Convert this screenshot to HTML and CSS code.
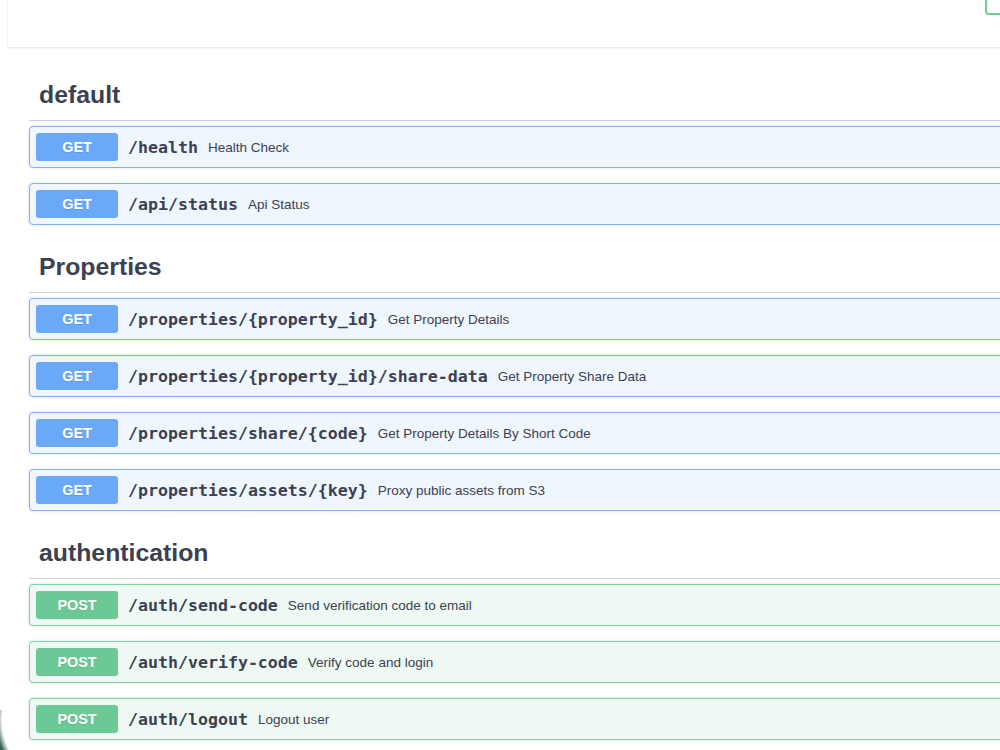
FILE: index.html
```html
<!DOCTYPE html>
<html lang="en">
<head>
    <meta charset="UTF-8">
    <meta name="viewport" content="width=device-width, initial-scale=1.0">
    <title>API Docs</title>
    <link rel="stylesheet" href="styles.css">
</head>
<body>
    <div class="topbar">
        <button class="authorize"></button>
    </div>

    <div class="wrapper">
        <section class="tag-section">
            <h3 class="tag">default</h3>
            <div class="opblock get">
                <span class="method">GET</span>
                <span class="path">/health</span>
                <span class="desc">Health Check</span>
            </div>
            <div class="opblock get">
                <span class="method">GET</span>
                <span class="path">/api/status</span>
                <span class="desc">Api Status</span>
            </div>
        </section>

        <section class="tag-section">
            <h3 class="tag">Properties</h3>
            <div class="opblock get">
                <span class="method">GET</span>
                <span class="path">/properties/{property_id}</span>
                <span class="desc">Get Property Details</span>
            </div>
            <div class="opblock get">
                <span class="method">GET</span>
                <span class="path">/properties/{property_id}/share-data</span>
                <span class="desc">Get Property Share Data</span>
            </div>
            <div class="opblock get">
                <span class="method">GET</span>
                <span class="path">/properties/share/{code}</span>
                <span class="desc">Get Property Details By Short Code</span>
            </div>
            <div class="opblock get">
                <span class="method">GET</span>
                <span class="path">/properties/assets/{key}</span>
                <span class="desc">Proxy public assets from S3</span>
            </div>
        </section>

        <section class="tag-section">
            <h3 class="tag">authentication</h3>
            <div class="opblock post">
                <span class="method">POST</span>
                <span class="path">/auth/send-code</span>
                <span class="desc">Send verification code to email</span>
            </div>
            <div class="opblock post">
                <span class="method">POST</span>
                <span class="path">/auth/verify-code</span>
                <span class="desc">Verify code and login</span>
            </div>
            <div class="opblock post">
                <span class="method">POST</span>
                <span class="path">/auth/logout</span>
                <span class="desc">Logout user</span>
            </div>
        </section>
    </div>

    <div class="corner"></div>
</body>
</html>
```

FILE: styles.css
```css
body {
    font-family: 'Liberation Sans', Arial, sans-serif;
    margin: 0;
    padding: 0;
    background-color: #ffffff;
    color: #3b4151;
    width: 1000px;
    height: 750px;
    overflow: hidden;
    position: relative;
}

/* top scheme container with the authorize button */
.topbar {
    width: 1100px;
    height: 47px;
    margin: 0 0 21px 8px;
    background-color: #ffffff;
    box-shadow: 0 1px 2px 0 rgba(0, 0, 0, 0.12);
    display: flex;
    justify-content: flex-end;
    align-items: flex-start;
}

.authorize {
    width: 100px;
    height: 36px;
    margin-top: -21px;
    margin-right: 23px;
    background: transparent;
    border: 2px solid #6dcf9a;
    border-radius: 4px;
}

.wrapper {
    padding-left: 29px;
    width: 1100px;
}

.tag-section {
    display: flex;
    flex-direction: column;
}

.tag {
    margin: 0 0 5px;
    padding: 11px 20px 9px 10px;
    font-size: 24.8px;
    font-weight: bold;
    line-height: 32px;
    color: #3b4151;
    border-bottom: 1px solid rgba(59, 65, 81, 0.25);
}

.opblock {
    display: flex;
    align-items: center;
    height: 28px;
    padding: 6px;
    margin: 0 0 15px;
    border: 1px solid;
    border-radius: 4px;
    box-shadow: 0 0 3px rgba(0, 0, 0, 0.15);
}

.opblock.get {
    border-color: #7eb3f8;
    background-color: #f0f6fe;
}

.opblock.post {
    border-color: #7fd3a6;
    background-color: #eef9f3;
}

.method {
    width: 82px;
    height: 28px;
    line-height: 28px;
    text-align: center;
    border-radius: 3px;
    color: #ffffff;
    font-size: 14.4px;
    font-weight: bold;
    text-shadow: 0 1px 0 rgba(0, 0, 0, 0.1);
    flex-shrink: 0;
}

.get .method {
    background-color: #6aa9f6;
}

.post .method {
    background-color: #6cc894;
}

.path {
    padding: 0 10px;
    font-family: 'DejaVu Sans Mono', monospace;
    font-weight: bold;
    font-size: 16.6px;
    color: #3b4151;
    white-space: nowrap;
}

.desc {
    font-size: 13.5px;
    color: #3b4151;
    white-space: nowrap;
}

/* desktop showing through the rounded window corner */
.corner {
    position: absolute;
    left: 0;
    bottom: 0;
    width: 20px;
    height: 40px;
    background: radial-gradient(circle at 68px 10px, transparent 66px, #d8dedb 67px, #3a6656 72px, #2b5a4b 76px);
}
```
